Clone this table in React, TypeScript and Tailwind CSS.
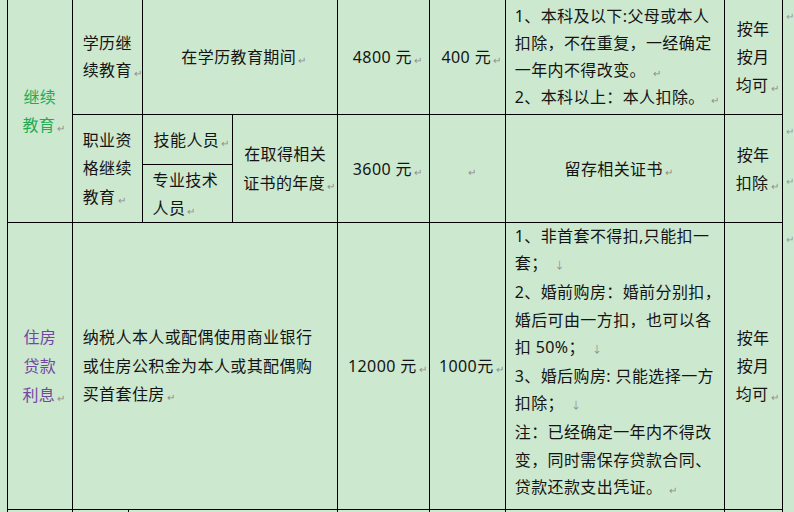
import React from "react";

const Mark = () => (
  <span className="inline-block w-0 whitespace-nowrap pl-[2px] align-[-1px] text-[10px] leading-none tracking-normal text-[#8e8e8e]">
    ↵
  </span>
);

const Brk = () => (
  <span className="pl-[7px] text-[10px] tracking-normal text-[#8e8e8e]">↓</span>
);

const cell = "border border-black p-0 align-middle";

const EndMark = () => (
  <td className="p-0 pt-[11px] align-top">
    <span className="block pl-[3px] text-[10px] leading-none text-[#9a9a9a]">↵</span>
  </td>
);

export default function App() {
  return (
    <div className="h-[512px] w-[794px] overflow-hidden bg-[#cce8cf] font-['Noto_Sans','Noto_Sans_CJK_SC',sans-serif] text-[16px] tracking-[0.4px] text-[#141414]">
      <table className="-mt-px ml-[7px] table-fixed border-collapse">
        <colgroup>
          <col className="w-[66px]" />
          <col className="w-[70px]" />
          <col className="w-[91px]" />
          <col className="w-[105px]" />
          <col className="w-[93px]" />
          <col className="w-[77px]" />
          <col className="w-[219px]" />
          <col className="w-[59px]" />
          <col className="w-[7px]" />
        </colgroup>
        <tbody>
          {/* 学历继续教育 */}
          <tr>
            <td rowSpan={3} className={`${cell} text-center leading-[28px] text-[#1fab55]`}>
              继续
              <br />
              教育
              <Mark />
            </td>
            <td className={`${cell} h-[115px] pl-[10px] leading-[27px]`}>
              学历继
              <br />
              续教育
              <Mark />
            </td>
            <td colSpan={2} className={`${cell} text-center`}>
              在学历教育期间
              <Mark />
            </td>
            <td className={`${cell} text-center`}>
              4800 元<Mark />
            </td>
            <td className={`${cell} text-center`}>
              400 元<Mark />
            </td>
            <td className={`${cell} pl-[9px] leading-[27px]`}>
              <div className="whitespace-nowrap">1、本科及以下:父母或本人</div>
              <div className="whitespace-nowrap">扣除，不在重复，一经确定</div>
              <div className="whitespace-nowrap">
                一年内不得改变。 <Mark />
              </div>
              <div className="whitespace-nowrap">
                2、本科以上：本人扣除。 <Mark />
              </div>
            </td>
            <td className={`${cell} text-center leading-[28px]`}>
              按年
              <br />
              按月
              <br />
              均可
              <Mark />
            </td>
            <EndMark />
          </tr>

          {/* 职业资格继续教育 */}
          <tr>
            <td rowSpan={2} className={`${cell} pl-[10px] leading-[28.5px]`}>
              职业资
              <br />
              格继续
              <br />
              教育
              <Mark />
            </td>
            <td className={`${cell} h-[50px] text-center`}>
              技能人员
              <Mark />
            </td>
            <td rowSpan={2} className={`${cell} text-center leading-[29px]`}>
              在取得相关
              <br />
              证书的年度
              <Mark />
            </td>
            <td rowSpan={2} className={`${cell} text-center`}>
              3600 元<Mark />
            </td>
            <td rowSpan={2} className={`${cell} text-center`}>
              <Mark />
            </td>
            <td rowSpan={2} className={`${cell} text-center`}>
              留存相关证书
              <Mark />
            </td>
            <td rowSpan={2} className={`${cell} text-center leading-[28px]`}>
              按年
              <br />
              扣除
              <Mark />
            </td>
            <EndMark />
          </tr>
          <tr>
            <td className={`${cell} h-[58px] pl-[10px] leading-[28px]`}>
              专业技术
              <br />
              人员
              <Mark />
            </td>
            <EndMark />
          </tr>

          {/* 住房贷款利息 */}
          <tr>
            <td className={`${cell} h-[287px] text-center leading-[29px] text-[#7446a4]`}>
              住房
              <br />
              贷款
              <br />
              利息
              <Mark />
            </td>
            <td colSpan={3} className={`${cell} pl-[10px] leading-[28.5px]`}>
              <div className="whitespace-nowrap">纳税人本人或配偶使用商业银行</div>
              <div className="whitespace-nowrap">或住房公积金为本人或其配偶购</div>
              <div className="whitespace-nowrap">
                买首套住房
                <Mark />
              </div>
            </td>
            <td className={`${cell} text-center`}>
              12000 元<Mark />
            </td>
            <td className={`${cell} text-center`}>
              1000元<Mark />
            </td>
            <td className={`${cell} pb-[8px] pl-[9px] leading-[27.2px]`}>
              <div className="whitespace-nowrap">1、非首套不得扣,只能扣一</div>
              <div className="whitespace-nowrap">
                套；
                <Brk />
              </div>
              <div className="whitespace-nowrap">2、婚前购房：婚前分别扣，</div>
              <div className="whitespace-nowrap">婚后可由一方扣，也可以各</div>
              <div className="whitespace-nowrap">
                扣 50%；
                <Brk />
              </div>
              <div className="whitespace-nowrap">3、婚后购房: 只能选择一方</div>
              <div className="whitespace-nowrap">
                扣除；
                <Brk />
              </div>
              <div className="whitespace-nowrap">注：已经确定一年内不得改</div>
              <div className="whitespace-nowrap">变，同时需保存贷款合同、</div>
              <div className="whitespace-nowrap">
                贷款还款支出凭证。 <Mark />
              </div>
            </td>
            <td className={`${cell} text-center leading-[28px]`}>
              按年
              <br />
              按月
              <br />
              均可
              <Mark />
            </td>
            <EndMark />
          </tr>

          {/* next row, cut off by the window */}
          <tr>
            <td className={`${cell} h-[40px]`} />
            <td colSpan={3} className={cell}>
              <div className="flex h-[40px]">
                <div className="w-[56px] border-r border-black" />
              </div>
            </td>
            <td className={cell} />
            <td className={cell} />
            <td className={cell} />
            <td className={cell} />
            <td className="p-0" />
          </tr>
        </tbody>
      </table>
    </div>
  );
}
